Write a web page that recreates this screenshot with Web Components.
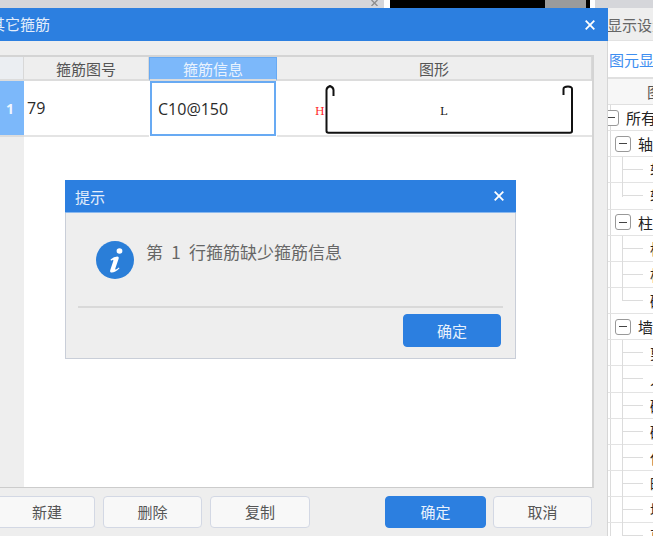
<!DOCTYPE html>
<html>
<head>
<meta charset="utf-8">
<style>
  html, body { margin: 0; padding: 0; width: 653px; height: 536px; overflow: hidden; background: #fff; }
  body { font-family: "Noto Sans CJK SC", "Open Sans", sans-serif; }
</style>
</head>
<body>
<app-screen></app-screen>

<script>
class AppButton extends HTMLElement {
  constructor() {
    super()
    this.attachShadow({mode: "open"})
    this.shadowRoot.innerHTML = `
      <style>
        :host {
          display: flex;
          align-items: center;
          justify-content: center;
          box-sizing: border-box;
          height: 32px;
          padding-bottom: 1px;
          border: 1px solid #d3d8e4;
          border-radius: 4px;
          background: #f8f8f8;
          color: #555;
          font-size: 15px;
        }
        :host([primary]) {
          background: #2c7fe0;
          border-color: #2c7fe0;
          color: #e8f1fc;
        }
      </style>
      <slot></slot>
    `
  }
}
customElements.define("app-button", AppButton)

class TitleBar extends HTMLElement {
  constructor() {
    super()
    this.attachShadow({mode: "open"})
    this.shadowRoot.innerHTML = `
      <style>
        :host {
          display: flex;
          align-items: center;
          justify-content: space-between;
          box-sizing: border-box;
          background: #2c7fe0;
          color: #e4eefb;
          font-size: 15px;
        }
        svg { display: block; flex: none; }
      </style>
      <span><slot></slot></span>
      <svg width="10" height="10" viewBox="0 0 10 10"><path d="M.7 .7 9.3 9.3M9.3 .7 .7 9.3" stroke="#fff" stroke-width="1.8" fill="none"/></svg>
    `
  }
}
customElements.define("title-bar", TitleBar)

class StirrupShape extends HTMLElement {
  constructor() {
    super()
    this.attachShadow({mode: "open"})
    this.shadowRoot.innerHTML = `
      <style>
        :host { display: block; position: relative; box-sizing: border-box; height: 56px; background: #fff; border-bottom: 2px solid #e4e4e4; }
        svg { position: absolute; left: 0; top: 0; }
        .h, .l { position: absolute; font-family: "DejaVu Serif", serif; font-size: 11px; line-height: 16px; }
        .h { left: 38px; top: 23px; color: #ff2020; }
        .l { left: 163px; top: 23px; color: #111; }
      </style>
      <svg width="315" height="54" viewBox="0 0 315 54">
        <path d="M56.5 15V9Q56.5 6.5 53 5Q49.5 6.5 49.5 9V50Q49.5 51.7 51.5 51.7H293Q295 51.7 295 50V8Q295 5.5 291 5.5Q286.5 5.5 286.5 8V14" fill="none" stroke="#111" stroke-width="2"/>
      </svg>
      <span class="h">H</span>
      <span class="l">L</span>
    `
  }
}
customElements.define("stirrup-shape", StirrupShape)

class StirrupTable extends HTMLElement {
  constructor() {
    super()
    this.attachShadow({mode: "open"})
    this.shadowRoot.innerHTML = `
      <style>
        :host {
          display: grid;
          grid-template-columns: 24px 125px 128px 315px;
          grid-template-rows: 24px 56px 1fr;
          box-sizing: border-box;
          border-top: 2px solid #d4d4d4;
          border-right: 2px solid #d4d4d4;
          border-bottom: 1px solid #ccc;
          height: 433px;
          font-size: 15px;
          background: #fff;
        }
        .head {
          display: flex; align-items: center; justify-content: center;
          box-sizing: border-box;
          background: #eeeeee; color: #555;
          border-bottom: 2px solid #dcdcdc;
          border-right: 1px solid #d8d8d8;
        }
        .corner { background: #ebeef2; border-right: 1px solid #d8d8d8; border-bottom: 2px solid #dcdcdc; }
        .active { background: #7cb8fa; color: #eaf3fe; border: 1px solid #68aaf3; border-bottom: 2px solid #dcdcdc; }
        .num {
          display: flex; align-items: center;
          box-sizing: border-box;
          padding-left: 6px;
          background: #7cb8fa; color: #eef6ff; font-weight: 700; font-size: 14px;
          font-family: "Open Sans", sans-serif;
          border-bottom: 2px solid #dcdcdc;
        }
        .cell {
          display: flex; align-items: center;
          box-sizing: border-box;
          font-family: "Open Sans", sans-serif; font-size: 16px; color: #2a2a2a;
          border-bottom: 2px solid #e4e4e4;
          padding-left: 3px;
        }
        .edit {
          border: 2px solid #68aaf3;
          padding-left: 6px;
          margin: 0 1px 1px;
          white-space: nowrap;
          background: #fff;
        }
        .rest { grid-column: 2 / 5; background: #fff; }
        .gutter { background: #eeeeee; }
      </style>
      <div class="corner"></div>
      <div class="head">箍筋图号</div>
      <div class="head active">箍筋信息</div>
      <div class="head">图形</div>
      <div class="num">1</div>
      <div class="cell">79</div>
      <div class="cell edit">C10@150</div>
      <stirrup-shape></stirrup-shape>
      <div class="gutter"></div>
      <div class="rest"></div>
    `
  }
}
customElements.define("stirrup-table", StirrupTable)

class HintDialog extends HTMLElement {
  constructor() {
    super()
    this.attachShadow({mode: "open"})
    this.shadowRoot.innerHTML = `
      <style>
        :host {
          position: absolute;
          left: 65px; top: 180px;
          width: 451px; height: 179px;
          box-sizing: border-box;
          display: flex; flex-direction: column;
          background: #eeeeee;
          border: 1px solid #c9ced8;
          border-top: 0;
        }
        title-bar { height: 33px; padding: 0 12px 0 10px; margin: 0 -1px; border-bottom: 1px solid #8ab8ee; flex: none; }
        .msg {
          display: flex; align-items: flex-start; gap: 12px;
          padding: 28px 0 0 30px; height: 65px;
          font-size: 17px; color: #666;
          word-spacing: 4.5px;
          white-space: nowrap;
        }
        .msg svg { display: block; flex: none; }
        .msg span { line-height: 22px; }
        hr { margin: 0 12px; border: 0; border-top: 2px solid #d9d9d9; height: 0; width: 425px; }
        .foot { display: flex; justify-content: flex-end; padding: 6px 14px 0 0; }
        app-button { width: 98px; height: 33px; }
      </style>
      <title-bar>提示</title-bar>
      <div class="msg">
        <svg width="38" height="38" viewBox="0 0 38 38">
          <circle cx="19" cy="19" r="19" fill="#2a7ed8"/>
          <ellipse cx="23.5" cy="10" rx="2.9" ry="2.7" fill="#fff"/>
          <path d="M14.5 18.6Q18 15.6 21.4 15.6Q23.2 15.6 22.7 17.6L19.3 27.4Q18.9 28.7 19.7 28.6Q20.7 28.4 22.8 26.4L23.5 27.2Q19 31.6 15.9 31.6Q13.6 31.6 14.2 29.2L17.3 19.9Q17.6 18.6 16.6 18.9Q15.8 19.2 15.1 19.7Z" fill="#fff"/>
        </svg>
        <span>第 1 行箍筋缺少箍筋信息</span>
      </div>
      <hr>
      <div class="foot"><app-button primary>确定</app-button></div>
    `
  }
}
customElements.define("hint-dialog", HintDialog)

class StirrupDialog extends HTMLElement {
  constructor() {
    super()
    this.attachShadow({mode: "open"})
    this.shadowRoot.innerHTML = `
      <style>
        :host {
          display: flex; flex-direction: column; flex: none;
          box-sizing: border-box;
          width: 608px; height: 528px;
          background: #eeeeee;
        }
        title-bar { height: 33px; padding: 0 13px 0 0; flex: none; }
        .title-text { margin-left: -10px; position: relative; top: -1px; }
        .body { padding: 14px 13px 0 0; height: 448px; box-sizing: border-box; border-right: 1px solid #d6d6d6; }
        .foot { display: flex; flex: 1; padding: 7px 15px 0 0; border-right: 1px solid #d6d6d6; }
        .foot app-button { height: 32px; }
        .left { display: flex; gap: 8px; }
        .right { display: flex; gap: 7px; margin-left: auto; }
      </style>
      <title-bar><span class="title-text">其它箍筋</span></title-bar>
      <div class="body"><stirrup-table></stirrup-table></div>
      <div class="foot">
        <div class="left">
          <app-button style="width:95px;border-left:0;border-radius:0 4px 4px 0">新建</app-button>
          <app-button style="width:99px">删除</app-button>
          <app-button style="width:100px">复制</app-button>
        </div>
        <div class="right">
          <app-button primary style="width:101px">确定</app-button>
          <app-button style="width:99px">取消</app-button>
        </div>
      </div>
    `
  }
}
customElements.define("stirrup-dialog", StirrupDialog)

class TreeRow extends HTMLElement {
  constructor() {
    super()
    this.attachShadow({mode: "open"})
    const kind = this.getAttribute("kind") || "leaf"
    const box = `<i class="box"></i>`
    this.shadowRoot.innerHTML = `
      <style>
        :host {
          display: flex; align-items: center; box-sizing: border-box;
          height: 26.15px; border-bottom: 1px solid #e3e3e3;
          font-size: 15px; color: #222; white-space: nowrap; position: relative;
        }
        .box {
          display: block; box-sizing: border-box; position: relative; flex: none;
          width: 16px; height: 16px; border: 1px solid #999; border-radius: 3px; background: #fff;
        }
        .box::after { content: ""; position: absolute; left: 3px; top: 6.5px; width: 8px; height: 1px; background: #444; }
        .line { position: absolute; left: 14px; top: 0; bottom: -1px; width: 1px; background: #dcdcdc; }
        :host([last]) .line { bottom: 12px; }
        .dash { flex: none; width: 21px; height: 1px; background: #dcdcdc; margin: 0 7px 0 14px; }
        :host([kind="root"]) .box { margin-left: -5px; }
        :host([kind="group"]) { padding-left: 7px; }
        .label { margin-left: 7px; }
      </style>
      ${kind === "leaf"
        ? `<i class="line"></i><i class="dash"></i><span><slot></slot></span>`
        : `${box}<span class="label"><slot></slot></span>`}
    `
  }
}
customElements.define("tree-row", TreeRow)

class SidePanel extends HTMLElement {
  constructor() {
    super()
    this.attachShadow({mode: "open"})
    this.shadowRoot.innerHTML = `
      <style>
        :host {
          display: flex; flex-direction: column; flex: none;
          box-sizing: border-box; width: 45px; height: 528px; background: #fff; overflow: hidden;
          font-size: 15px;
        }
        .tab { height: 33px; background: #eeeeee; color: #666; display: flex; align-items: center; white-space: nowrap; flex: none; margin-left: -1px; border-bottom: 1px solid #e2e2e2; box-sizing: border-box; }
        .link { height: 36px; color: #3e8ef0; display: flex; align-items: center; white-space: nowrap; flex: none; padding-left: 1px; }
        .head { height: 28px; background: #f7f7f7; border-top: 2px solid #e0e0e0; border-bottom: 1px solid #e0e0e0; box-sizing: border-box; color: #555; display: flex; align-items: center; white-space: nowrap; flex: none; padding-left: 39px; }
        .tree { flex: 1; overflow: hidden; background: linear-gradient(#dcdcdc, #dcdcdc) 2px 0 / 1px 100% no-repeat; }
      </style>
      <div class="tab">显示设置</div>
      <div class="link">图元显示</div>
      <div class="head">图层</div>
      <div class="tree">
        <tree-row kind="root">所有构件</tree-row>
        <tree-row kind="group">轴线</tree-row>
        <tree-row>轴网</tree-row>
        <tree-row last>轴线</tree-row>
        <tree-row kind="group">柱</tree-row>
        <tree-row>框柱</tree-row>
        <tree-row>构造柱</tree-row>
        <tree-row last>砌体柱</tree-row>
        <tree-row kind="group">墙</tree-row>
        <tree-row>剪力墙</tree-row>
        <tree-row>人防墙</tree-row>
        <tree-row>砌体墙</tree-row>
        <tree-row>砌块墙</tree-row>
        <tree-row>保温墙</tree-row>
        <tree-row>暗梁</tree-row>
        <tree-row>墙垛</tree-row>
        <tree-row>幕墙</tree-row>
      </div>
    `
  }
}
customElements.define("side-panel", SidePanel)

class AppScreen extends HTMLElement {
  constructor() {
    super()
    this.attachShadow({mode: "open"})
    this.shadowRoot.innerHTML = `
      <style>
        :host { display: block; position: relative; width: 653px; height: 536px; overflow: hidden; background: #fff; }
        .top { display: flex; height: 8px; background: #d5d6da; }
        .top span { display: block; flex: none; }
        .fill { flex: 1 !important; }
        .close { width: 384px; display: flex !important; justify-content: flex-end; padding-right: 6px; box-sizing: border-box; }
        .close svg { display: block; }
        .white { background: #fff; }
        .black { background: #000; }
        .grey { background: #9b9b9b; }
        .main { display: flex; height: 528px; }
      </style>
      <div class="top">
        <span class="close"><svg width="7" height="6" viewBox="0 0 7 6"><path d="M.5 0 6.5 6M6.5 0 .5 6" stroke="#8f8f8f" stroke-width="1.4" fill="none"/></svg></span>
        <span class="white" style="width:6px"></span>
        <span class="black" style="width:155px"></span>
        <span class="grey" style="width:41px"></span>
        <span class="black" style="width:4px"></span>
        <span class="white" style="width:5px"></span>
        <span class="fill"></span>
      </div>
      <div class="main">
        <stirrup-dialog></stirrup-dialog>
        <side-panel></side-panel>
      </div>
      <hint-dialog></hint-dialog>
    `
  }
}
customElements.define("app-screen", AppScreen)
</script>
</body>
</html>
